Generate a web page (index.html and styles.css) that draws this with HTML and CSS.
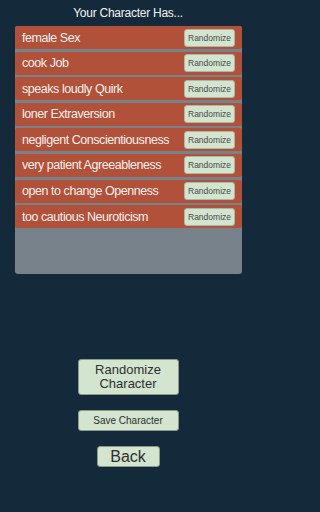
FILE: index.html
```html
<!DOCTYPE html>
<html>
<head>
<meta charset="utf-8">
<link rel="stylesheet" href="styles.css">
</head>
<body>
<div class="screen">
  <div class="title">Your Character Has...</div>
  <div class="panel">
    <div class="row"><span class="label">female Sex</span><button class="rand">Randomize</button></div>
    <div class="row"><span class="label">cook Job</span><button class="rand">Randomize</button></div>
    <div class="row"><span class="label">speaks loudly Quirk</span><button class="rand">Randomize</button></div>
    <div class="row"><span class="label">loner Extraversion</span><button class="rand">Randomize</button></div>
    <div class="row"><span class="label">negligent Conscientiousness</span><button class="rand">Randomize</button></div>
    <div class="row"><span class="label">very patient Agreeableness</span><button class="rand">Randomize</button></div>
    <div class="row"><span class="label">open to change Openness</span><button class="rand">Randomize</button></div>
    <div class="row"><span class="label">too cautious Neuroticism</span><button class="rand">Randomize</button></div>
  </div>
  <div class="actions">
    <button class="btn big">Randomize<br>Character</button>
    <button class="btn save">Save Character</button>
    <button class="btn back">Back</button>
  </div>
</div>
</body>
</html>
```
FILE: styles.css
```css
html, body {
  margin: 0;
  padding: 0;
  background: #142a3b;
  font-family: "Liberation Sans", Arial, sans-serif;
}
.screen {
  width: 256px;
  height: 512px;
  display: flex;
  flex-direction: column;
  align-items: center;
}
.title {
  height: 26px;
  line-height: 26px;
  color: #f2f2f2;
  font-size: 12px;
  letter-spacing: -0.25px;
}
.panel {
  width: 227px;
  height: 248px;
  margin-left: 1px;
  box-sizing: border-box;
  background: #77828a;
  border-radius: 3px;
  display: flex;
  flex-direction: column;
  gap: 2.6px;
}
.row {
  height: 23px;
  flex: none;
  background: #b1513a;
  border-radius: 2px;
  display: flex;
  align-items: center;
  justify-content: space-between;
  padding: 0 7px 0 7px;
}
.label {
  color: #f4f0ee;
  font-size: 12.5px;
  letter-spacing: -0.45px;
}
.rand {
  width: 51px;
  height: 18px;
  padding: 0;
  border: 1px solid #a9b8a6;
  border-radius: 3px;
  background: #d3e4cf;
  color: #4a4a4a;
  font-family: "Liberation Sans", Arial, sans-serif;
  font-size: 8.5px;
}
.actions {
  margin-top: 85px;
  display: flex;
  flex-direction: column;
  align-items: center;
}
.btn {
  padding: 0;
  border: 1px solid #8a9a8a;
  border-radius: 3px;
  background: #d3e4cf;
  color: #2f2f2f;
  font-family: "Liberation Sans", Arial, sans-serif;
}
.big {
  width: 101px;
  height: 36px;
  font-size: 13px;
  line-height: 14px;
}
.save {
  margin-top: 15px;
  width: 101px;
  height: 21px;
  font-size: 10px;
}
.back {
  margin-top: 15px;
  width: 63px;
  height: 21px;
  font-size: 16px;
}
```
